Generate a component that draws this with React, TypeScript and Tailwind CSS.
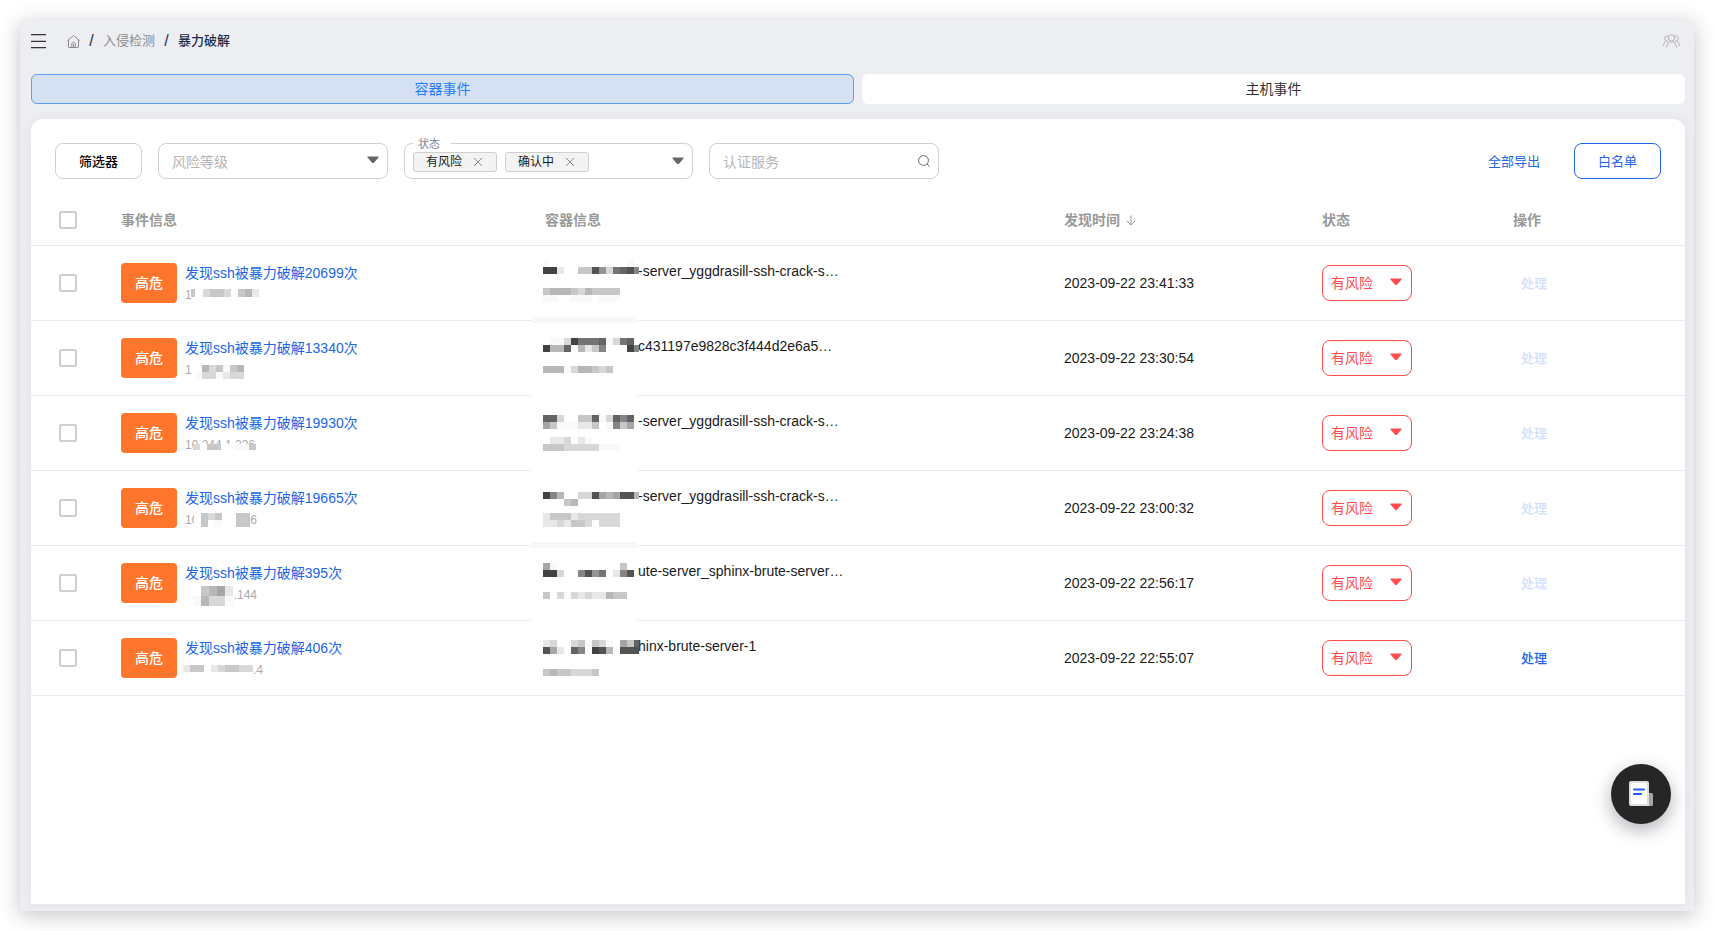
import { useState } from 'react'

interface TileLine {
  x?: number
  y: number
  w?: number
  h?: number
  tiles: string
}

interface CrackEvent {
  id: number
  title: string
  ipHead: string
  ipTail: string
  ipWidth: string
  ipMask: TileLine[]
  container: string
  containerMask: TileLine[]
  // 行分隔线被遮住的方式
  edge: 'none' | 'gap' | 'band'
  time: string
  canHandle: boolean
}

const events: CrackEvent[] = [
  {
    id: 1,
    title: '发现ssh被暴力破解20699次',
    ipHead: '1',
    ipTail: '',
    ipWidth: 'w-18',
    ipMask: [
      { x: 6, y: 43, w: 4, h: 8, tiles: 'c' },
      { x: 18, y: 43, h: 8, tiles: 'dccd.cbe' },
    ],
    container: '-server_yggdrasill-ssh-crack-s…',
    containerMask: [
      { y: 14, tiles: 'f...........f' },
      { y: 21, tiles: '44e..cc59d7658' },
      { y: 42, tiles: 'cbbbcdbcccc' },
      { y: 49, tiles: 'ff..fff.fff' },
    ],
    edge: 'band',
    time: '2023-09-22 23:41:33',
    canHandle: false,
  },
  {
    id: 2,
    title: '发现ssh被暴力破解13340次',
    ipHead: '1',
    ipTail: '',
    ipWidth: 'w-18',
    ipMask: [
      { x: 17, y: 44, tiles: 'bdcfcb' },
      { x: 10, y: 51, tiles: 'fddfedd' },
    ],
    container: 'c431197e9828c3f444d2e6a5…',
    containerMask: [
      { y: 17, tiles: '.ffd47776fd76' },
      { y: 24, tiles: '4bb6.bec8...48' },
      { y: 45, tiles: 'bbbfdbbcdc' },
    ],
    edge: 'gap',
    time: '2023-09-22 23:30:54',
    canHandle: false,
  },
  {
    id: 3,
    title: '发现ssh被暴力破解19930次',
    ipHead: '10.244.1.226',
    ipTail: '',
    ipWidth: 'w-18',
    ipMask: [{ x: 8, y: 48, h: 6, tiles: 'd.cc..ffc' }],
    container: '-server_yggdrasill-ssh-crack-s…',
    containerMask: [
      { y: 19, tiles: '66d..cc6fd686' },
      { y: 26, tiles: 'acfffeec.f8ca' },
      { y: 41, tiles: '.eed.ef' },
      { y: 48, tiles: 'cccdddddfff' },
    ],
    edge: 'gap',
    time: '2023-09-22 23:24:38',
    canHandle: false,
  },
  {
    id: 4,
    title: '发现ssh被暴力破解19665次',
    ipHead: '10',
    ipTail: '6',
    ipWidth: 'w-18',
    ipMask: [
      { x: 9, y: 42, h: 14, tiles: '.' },
      { x: 16, y: 42, tiles: 'cdc..cc' },
      { x: 16, y: 49, tiles: 'c.f..cc' },
    ],
    container: '-server_yggdrasill-ssh-crack-s…',
    containerMask: [
      { y: 21, tiles: '48b..dd5aba55b' },
      { y: 28, tiles: '...cb' },
      { y: 42, tiles: 'ecccedddddd' },
      { y: 49, tiles: 'eedeccd.ddd' },
    ],
    edge: 'band',
    time: '2023-09-22 23:00:32',
    canHandle: false,
  },
  {
    id: 5,
    title: '发现ssh被暴力破解395次',
    ipHead: '',
    ipTail: '.144',
    ipWidth: 'w-18',
    ipMask: [
      { x: 16, y: 40, w: 8, h: 10, tiles: 'cbae' },
      { x: 8, y: 50, w: 8, h: 10, tiles: 'fbddf' },
    ],
    container: 'ute-server_sphinx-brute-server…',
    containerMask: [
      { y: 17, tiles: 'af.........c' },
      { y: 24, tiles: '44d..8597.e85' },
      { y: 46, tiles: 'c.dfdedeebcc' },
    ],
    edge: 'gap',
    time: '2023-09-22 22:56:17',
    canHandle: false,
  },
  {
    id: 6,
    title: '发现ssh被暴力破解406次',
    ipHead: '',
    ipTail: '.4',
    ipWidth: 'w-[78px]',
    ipMask: [{ x: -2, y: 44, tiles: 'ecc.edccdd' }],
    container: 'hinx-brute-server-1',
    containerMask: [
      { y: 19, tiles: 'ed..dcfcdf.ac6' },
      { y: 26, tiles: '5ae.68.45b.555' },
      { y: 48, tiles: 'cbccdddc' },
    ],
    edge: 'none',
    time: '2023-09-22 22:55:07',
    canHandle: true,
  },
]

// 每个字符是一格灰度（十六进制），点为白色
function Mosaic({ lines, edge = 'none' }: { lines: TileLine[]; edge?: CrackEvent['edge'] }) {
  return (
    <svg className="pointer-events-none absolute top-0 left-0 overflow-visible" width="96" height="75" shapeRendering="crispEdges" aria-hidden="true">
      {edge !== 'none' && <rect x="-12" y="71" width="107" height="6" fill="#fff" />}
      {edge === 'band' && <rect x="-11" y="71" width="104" height="6" fill="#f7f7f7" />}
      {lines.map(({ x = 0, y, w = 7, h = 7, tiles }, row) =>
        tiles.split('').map((c, i) => {
          const v = c === '.' ? 255 : Math.round(parseInt(c, 16) * 16.6)
          return <rect key={`${row}-${i}`} x={x + i * w} y={y} width={i === 13 ? 5 : w} height={h} fill={`rgb(${v},${v},${v})`} />
        })
      )}
    </svg>
  )
}

function Caret({ className }: { className: string }) {
  return (
    <svg className={className} width="12" height="8" viewBox="0 0 12 8" fill="currentColor" aria-hidden="true">
      <path d="M1 .5h10c.6 0 .8.6.5 1.100L7.200 6.400c-.7.9-1.700.9-2.400 0L.5 1.600C.2 1.100.4.5 1 .5z" />
    </svg>
  )
}

function CloseIcon() {
  return (
    <svg width="10" height="10" viewBox="0 0 10 10" stroke="#8c8c8c" fill="none" aria-hidden="true">
      <path d="M1 1l8 8M9 1L1 9" />
    </svg>
  )
}

function Checkbox({ label }: { label: string }) {
  return (
    <input
      type="checkbox"
      aria-label={label}
      className="block size-[18px] appearance-none rounded-[2px] border-2 border-[#cfcfcf] bg-white checked:border-[#2065e8] checked:bg-[#2065e8]"
    />
  )
}

function TopBar() {
  return (
    <header className="flex h-[42px] items-center justify-between pr-[5px]">
      <div className="flex items-center">
        <button type="button" aria-label="菜单">
          <svg width="15" height="15" viewBox="0 0 15 15" stroke="#333" strokeWidth="1.3" aria-hidden="true">
            <path d="M0 .7h15M0 7.300h15M0 13.700h15" />
          </svg>
        </button>
        <nav aria-label="面包屑" className="ml-[21px] flex items-center text-[13px] leading-5 text-[#1f2d4d]">
          <a href="#" aria-label="首页">
            <svg width="13" height="13" viewBox="0 0 13 13" fill="none" stroke="#8c8c8c" aria-hidden="true">
              <path d="M.5 5.500L6.500.6l6 4.900M1.500 4.800v7.200c0 .3.200.5.500.5h9c.3 0 .5-.2.500-.5V4.800M4.800 12.500V9c0-1 .7-1.600 1.700-1.600S8.200 8 8.200 9v3.500M6.500 9v3.500" />
            </svg>
          </a>
          <span className="w-[23px] text-center text-base">/</span>
          <a href="#" className="text-[#8c8c8c]">入侵检测</a>
          <span className="w-[23px] text-center text-base">/</span>
          <span className="font-medium">暴力破解</span>
        </nav>
      </div>
      <button type="button" aria-label="用户">
        <svg width="17" height="14" viewBox="0 0 17 14" fill="none" stroke="#b0b0b0" aria-hidden="true">
          <circle cx="8.500" cy="4" r="3.200" />
          <path d="M3.500 13.500c0-3.200 2-5.700 5-5.700s5 2.500 5 5.700M5 2.200C3 1.400 1.700 2.700 1.700 4.300c0 1.200.6 2 1.500 2.500M12 2.200c2-.8 3.300.5 3.300 2.100 0 1.200-.6 2-1.500 2.500M.5 12c.1-2.300.9-4 2.700-5.200L5 7.500M16.500 12c-.1-2.300-.9-4-2.700-5.200l-1.800.7" />
        </svg>
      </button>
    </header>
  )
}

function FilterBar() {
  const [statuses, setStatuses] = useState(['有风险', '确认中'])

  return (
    <div className="flex items-center gap-4 px-6 pt-6">
      <button type="button" className="h-9 w-[87px] rounded-lg border border-[#d0d0d0] pt-px text-[13px] font-medium text-black">筛选器</button>

      <div className="relative w-[230px]">
        <select aria-label="风险等级" defaultValue="" className="h-9 w-full appearance-none rounded-lg border border-[#d0d0d0] bg-white px-[13px] pt-0.5 text-sm text-[#b5b5b5] outline-none">
          <option value="">风险等级</option>
          <option value="high">高危</option>
        </select>
        <Caret className="pointer-events-none absolute top-[13px] right-[9px] text-[#666]" />
      </div>

      <div className="relative flex h-9 w-[289px] items-center gap-2 rounded-lg border border-[#d0d0d0] pt-0.5 pl-2">
        <span className="absolute -top-2 left-2 bg-white pr-[11px] pl-[5px] text-[11px] leading-4 text-[#7a8699]">状态</span>
        {statuses.map((s) => (
          <span key={s} className="flex h-5 w-[84px] items-center justify-between rounded-[3px] border border-[#cfcfcf] bg-[#f3f3f3] pr-[13px] pl-3 text-xs text-[#1a1a1a]">
            {s}
            <button type="button" aria-label={`移除${s}`} onClick={() => setStatuses(statuses.filter((v) => v !== s))}>
              <CloseIcon />
            </button>
          </span>
        ))}
        <button type="button" aria-label="选择状态" className="mr-2 mb-0.5 ml-auto">
          <Caret className="text-[#666]" />
        </button>
      </div>

      <div className="relative w-[230px]">
        <input type="text" aria-label="认证服务" placeholder="认证服务" className="h-9 w-full rounded-lg border border-[#d0d0d0] px-[13px] pt-0.5 text-sm outline-none placeholder:text-[#b5b5b5]" />
        <svg className="absolute top-3 right-[9px]" width="12" height="12" viewBox="0 0 12 12" fill="none" stroke="#666" aria-hidden="true">
          <circle cx="5.500" cy="5.500" r="4.900" />
          <path d="M9 9l2.500 2.500" />
        </svg>
      </div>

      <div className="ml-auto flex items-center gap-[34px] text-[13px] text-[#2065e8]">
        <button type="button" className="pt-px">全部导出</button>
        <button type="button" className="h-9 w-[87px] rounded-lg border border-[#2065e8] pt-px">白名单</button>
      </div>
    </div>
  )
}

function EventTable() {
  return (
    <table className="mt-4 w-full table-fixed border-separate border-spacing-0 text-left text-sm text-[#1a1a1a]">
      <colgroup>
        <col className="w-[90px]" />
        <col className="w-[422px]" />
        <col />
        <col className="w-[258px]" />
        <col className="w-[191px]" />
        <col className="w-[172px]" />
      </colgroup>
      <thead>
        <tr className="h-[51px] text-[#999] *:border-b *:border-[#ebebeb] *:p-0 *:font-bold">
          <th className="pl-7!"><Checkbox label="全选" /></th>
          <th>事件信息</th>
          <th><span className="ml-0.5">容器信息</span></th>
          <th aria-sort="descending">
            <button type="button" className="flex items-center gap-1.5">
              发现时间
              <svg width="10" height="11" viewBox="0 0 10 11" fill="none" stroke="#999" aria-hidden="true">
                <path d="M5 .5v9.500M.8 5.800L5 10l4.200-4.200" />
              </svg>
            </button>
          </th>
          <th>状态</th>
          <th>操作</th>
        </tr>
      </thead>
      <tbody>
        {events.map((e) => (
          <tr key={e.id} className="h-[75px] *:border-b *:border-[#ebebeb] *:p-0">
            <td className="pl-7!"><Checkbox label={e.title} /></td>
            <td>
              <div className="flex h-[74px] items-center gap-2">
                <span className="flex h-10 w-14 items-center justify-center rounded bg-[#ff752b] font-medium text-white">高危</span>
                <div className="relative h-full pt-[17px]">
                  <a href="#" className="block leading-5 text-[#2065e8]">{e.title}</a>
                  <div className={`mt-0.5 flex h-5 justify-between text-xs leading-5 text-[#aaa] ${e.ipWidth}`}>
                    <span>{e.ipHead}</span>
                    <span>{e.ipTail}</span>
                  </div>
                  <Mosaic lines={e.ipMask} />
                </div>
              </div>
            </td>
            <td>
              <div className="relative h-[74px] pt-[15px]">
                <p className="truncate pl-[95px] leading-5">{e.container}</p>
                <Mosaic lines={e.containerMask} edge={e.edge} />
              </div>
            </td>
            <td>{e.time}</td>
            <td>
              <div className="relative w-[90px]">
                <select aria-label="状态" defaultValue="risk" className="block h-9 w-full appearance-none rounded-lg border border-[#ff4d4f] bg-white pl-2 text-sm text-[#ff4d4f] outline-none">
                  <option value="risk">有风险</option>
                  <option value="checking">确认中</option>
                </select>
                <Caret className="pointer-events-none absolute top-[13px] right-[10px] text-[#ff4d4f]" />
              </div>
            </td>
            <td>
              <button type="button" disabled={!e.canHandle} className="ml-2 text-[13px] font-medium text-[#2065e8] disabled:text-[#d2e0fb]">处理</button>
            </td>
          </tr>
        ))}
      </tbody>
    </table>
  )
}

export default function App() {
  const [tab, setTab] = useState('容器事件')

  return (
    <div className="flex min-h-screen bg-white p-5 font-['Liberation_Sans','Noto_Sans_CJK_SC',sans-serif]">
      <div className="relative flex min-w-0 flex-1 flex-col bg-[#edeef2] pr-[9px] pb-[7px] pl-[11px] shadow-[0_4px_20px_rgba(0,0,0,0.24)]">
        <TopBar />

        <div role="tablist" className="mt-3 grid grid-cols-2 gap-2">
          {['容器事件', '主机事件'].map((t) => (
            <button
              key={t}
              type="button"
              role="tab"
              aria-selected={tab === t}
              onClick={() => setTab(t)}
              className="h-[30px] rounded-md bg-white text-sm text-[#333] aria-selected:border aria-selected:border-[#5a9df5] aria-selected:bg-[#d5e1f3] aria-selected:text-[#1f7bff]"
            >
              {t}
            </button>
          ))}
        </div>

        <main className="mt-[15px] flex-1 rounded-t-xl bg-white shadow-[0_0_12px_rgba(40,50,80,0.06)]">
          <FilterBar />
          <EventTable />
        </main>

        <button type="button" aria-label="文档" className="absolute right-[23px] bottom-[87px] flex size-15 items-center justify-center rounded-full bg-[#262626] shadow-[0_6px_18px_rgba(30,35,50,0.35)]">
          <svg width="26" height="26" viewBox="0 0 26 26" aria-hidden="true">
            <rect x="19" y="12" width="6" height="13" rx="1.500" fill="#a6a6a6" />
            <path d="M3 0h16a2 2 0 0 1 2 2v23H3a2 2 0 0 1-2-2V2a2 2 0 0 1 2-2z" fill="#dedede" />
            <rect x="3" y="2" width="16" height="21" rx="2" fill="#fff" />
            <path d="M6 8.500h10M6 13h7" stroke="#1f5eff" strokeWidth="2.200" strokeLinecap="round" />
          </svg>
        </button>
      </div>
    </div>
  )
}
